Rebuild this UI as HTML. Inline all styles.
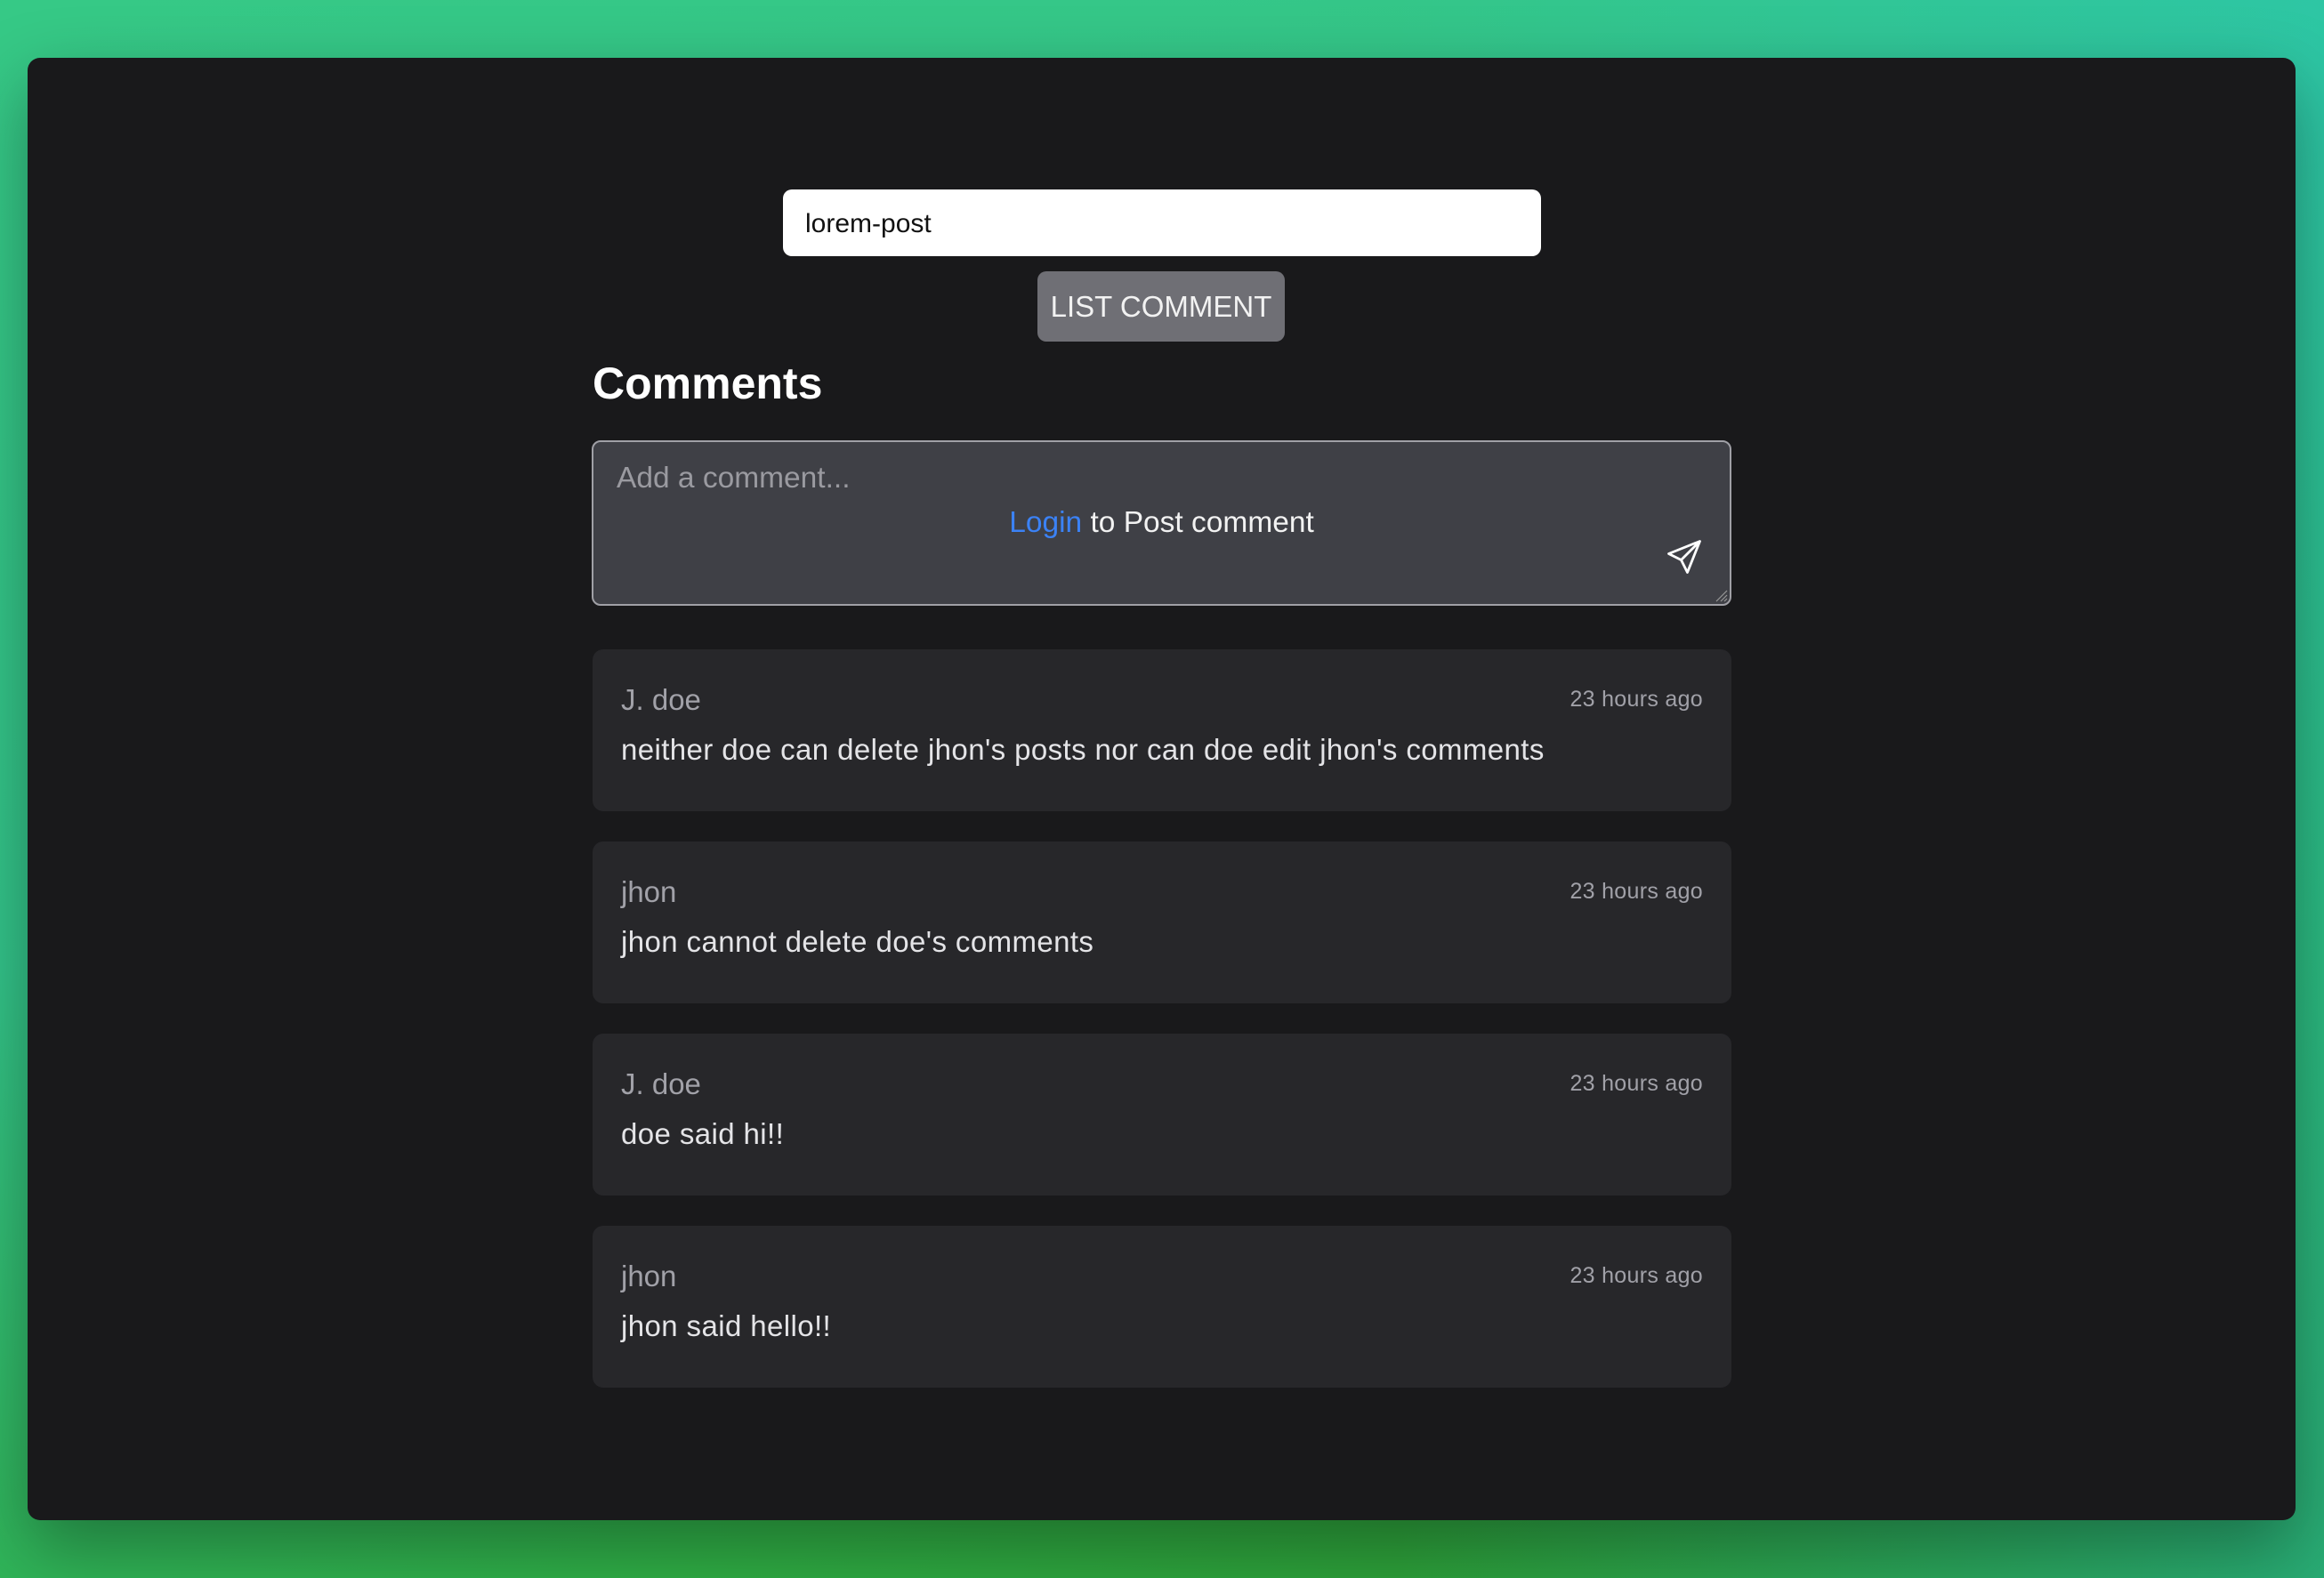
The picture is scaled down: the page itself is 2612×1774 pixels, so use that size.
<!DOCTYPE html>
<html><head><meta charset="utf-8"><style>
*{box-sizing:border-box;margin:0;padding:0}
html,body{width:2612px;height:1774px;overflow:hidden}
body{font-family:"Liberation Sans",sans-serif;background:linear-gradient(160deg,#36c986 0%,#33c48a 40%,#2fae45 75%,#2a8f2a 100%);position:relative}
body:before{content:"";position:absolute;inset:0;background:linear-gradient(90deg,rgba(0,0,0,0) 60%,rgba(40,200,190,.5) 100%);}
.panel{position:absolute;left:31px;top:65px;width:2549px;height:1644px;background:#19191b;border-radius:14px;box-shadow:0 30px 80px rgba(0,0,0,.35)}
.inp{position:absolute;left:880px;top:213px;width:852px;height:75px;background:#fff;border-radius:10px;font-size:30px;color:#111;padding-left:25px;line-height:77px}
.btn{position:absolute;left:1166px;top:305px;width:278px;height:79px;background:#6f6f75;border-radius:10px;color:#f2f2f2;font-size:33px;text-align:center;line-height:79px}
h2{position:absolute;left:666px;top:402px;font-size:50px;font-weight:bold;color:#fff}
.ta{position:absolute;left:665px;top:495px;width:1281px;height:186px;background:#3f4046;border:2px solid #a0a0a6;border-radius:10px}
.ph{position:absolute;left:26px;top:22px;font-size:33.5px;color:#9a9aa0}
.lg{position:absolute;left:0;width:100%;top:72px;text-align:center;font-size:33.5px;color:#f2f2f2}
.lg span{color:#3b82f6}
.card{position:absolute;left:666px;width:1280px;height:182px;background:#27272a;border-radius:12px}
.nm{position:absolute;left:32px;top:38px;font-size:33px;color:#a1a1a8}
.tm{position:absolute;right:32px;top:42px;font-size:25px;color:#a1a1a8;letter-spacing:.3px}
.bd{position:absolute;left:32px;top:94px;font-size:33px;color:#e4e4e7;letter-spacing:.4px}
</style></head><body>
<div class="panel"></div>
<div class="inp">lorem-post</div>
<div class="btn">LIST COMMENT</div>
<h2>Comments</h2>
<div class="ta"><div class="ph">Add a comment...</div><div class="lg"><span>Login</span> to Post comment</div>
<svg style="position:absolute;right:30px;top:108px" width="42" height="42" viewBox="0 0 24 24" fill="none" stroke="#fff" stroke-width="1.6" stroke-linejoin="round"><path d="M22 2L2 10l8 4 4 8z M22 2L10 14"/></svg>
<svg style="position:absolute;right:2px;bottom:2px" width="16" height="16"><path d="M15 3L3 15M15 8L8 15M15 12L12 15" stroke="#999" stroke-width="1.2"/></svg></div>
<div class="card" style="top:730px"><div class="nm">J. doe</div><div class="tm">23 hours ago</div><div class="bd">neither doe can delete jhon's posts nor can doe edit jhon's comments</div></div>
<div class="card" style="top:946px"><div class="nm">jhon</div><div class="tm">23 hours ago</div><div class="bd">jhon cannot delete doe's comments</div></div>
<div class="card" style="top:1162px"><div class="nm">J. doe</div><div class="tm">23 hours ago</div><div class="bd">doe said hi!!</div></div>
<div class="card" style="top:1378px"><div class="nm">jhon</div><div class="tm">23 hours ago</div><div class="bd">jhon said hello!!</div></div>
</body></html>
